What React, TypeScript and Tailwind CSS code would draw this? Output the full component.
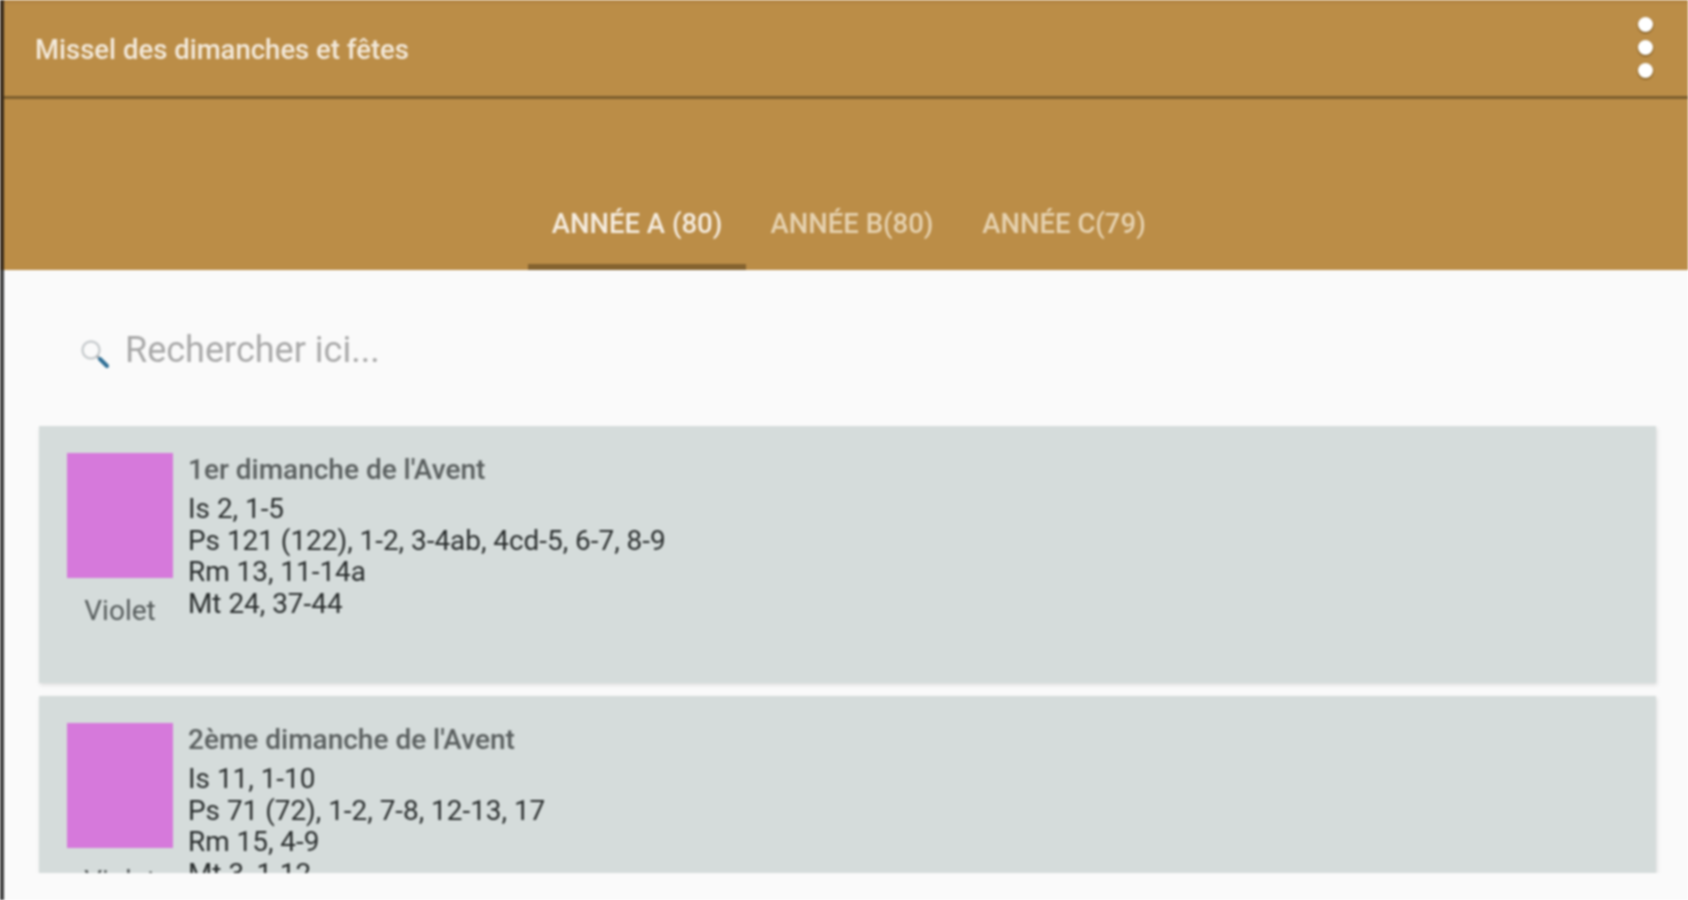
const Card = ({ title, lines, clipped }: { title: string; lines: string[]; clipped?: boolean }) => (
  <div className={`ml-[35px] mr-[32px] flex shrink-0 gap-[15px] bg-[#d5dcdb] pl-[28px] pt-[27px] shadow-[1px_2px_4px_rgba(0,0,0,0.12)] ${clipped ? "mb-0 h-[177px] overflow-hidden" : "mb-[13px] h-[257px]"}`}>
    <div className="flex w-[106px] shrink-0 flex-col items-center">
      <div className="h-[125px] w-[106px] shrink-0 bg-[#d679db]" />
      <div className="mt-[17px] text-[28px] leading-[32px] text-[#555b5b]">Violet</div>
    </div>
    <div className="flex flex-col pt-[1px]">
      <div className="text-[28px] font-medium leading-[32px] text-[#5a5f5f]">{title}</div>
      <div className="mt-[7px] text-[27.9px] leading-[31.7px] text-[#2a2e2e]">
        {lines.map((l) => (
          <div key={l}>{l}</div>
        ))}
      </div>
    </div>
  </div>
);

const Dot = () => <div className="h-[15px] w-[15px] rounded-full bg-white shadow-[0_1px_2px_rgba(90,55,0,0.9)]" />;

export default function App() {
  return (
    <div className="flex h-[900px] w-full overflow-hidden bg-[#fafafa] font-['Roboto',sans-serif] blur-[0.9px]">
      <div className="flex w-[4px] shrink-0 flex-col">
        <div className="h-[270px] bg-[#3a2c1c]" />
        <div className="flex-1 bg-[#404040]" />
      </div>
      <div className="flex min-w-0 flex-1 flex-col">
        <header className="h-[270px] shrink-0 bg-[#bb8d47]">
          <div className="flex h-[99px] items-center justify-between border-b-[3px] border-[#7d5e2e] border-t-[4px] border-t-[#b58745] pl-[31px] pr-[35px]">
            <span className="text-[27.5px] font-medium text-[#f3e9da]">Missel des dimanches et fêtes</span>
            <div className="mb-[5px] flex flex-col gap-[8px]">
              <Dot />
              <Dot />
              <Dot />
            </div>
          </div>
          <nav className="flex h-[171px] items-end justify-center pl-[6px]">
            <div className="flex h-[80px] w-[218px] items-center justify-center border-b-[6px] border-[#85632f] pb-[6px] text-[27.5px] font-medium text-[#f5ecdf]">
              ANNÉE A (80)
            </div>
            <div className="flex h-[80px] w-[212px] items-center justify-center pb-[12px] text-[27.5px] font-medium text-[#e6d2b0]">
              ANNÉE B(80)
            </div>
            <div className="flex h-[80px] w-[212px] items-center justify-center pb-[12px] text-[27.5px] font-medium text-[#e6d2b0]">
              ANNÉE C(79)
            </div>
          </nav>
        </header>
        <div className="flex h-[156px] shrink-0 items-start gap-[15px] pl-[74px] pt-[58px]">
          <svg width="32" height="32" viewBox="0 0 32 32" className="mt-[9px] shrink-0">
            <circle cx="13" cy="13" r="8.5" fill="none" stroke="#c9cdcf" strokeWidth="2.5" />
            <path d="M19 19 L22 22" stroke="#a8adb0" strokeWidth="3" />
            <path d="M22 22 L29 29" stroke="#2f6f96" strokeWidth="4" strokeLinecap="round" />
          </svg>
          <span className="text-[36px] leading-[44px] text-[#a9a9a9]">Rechercher ici...</span>
        </div>
        <div className="flex h-[447px] shrink-0 flex-col overflow-hidden">
          <Card title="1er dimanche de l'Avent" lines={["Is 2, 1-5", "Ps 121 (122), 1-2, 3-4ab, 4cd-5, 6-7, 8-9", "Rm 13, 11-14a", "Mt 24, 37-44"]} />
          <Card clipped title="2ème dimanche de l'Avent" lines={["Is 11, 1-10", "Ps 71 (72), 1-2, 7-8, 12-13, 17", "Rm 15, 4-9", "Mt 3, 1-12"]} />
        </div>
      </div>
    </div>
  );
}
